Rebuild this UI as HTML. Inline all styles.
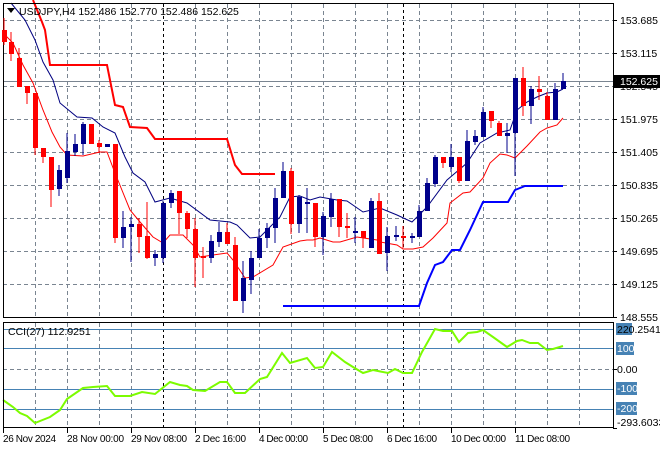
<!DOCTYPE html>
<html><head><meta charset="utf-8"><style>
html,body{margin:0;padding:0;background:#fff;}
svg{display:block;font-family:"Liberation Sans",sans-serif;font-size:10.5px;}
.ax text{font-size:10px;}
</style></head><body>
<svg width="660" height="450" viewBox="0 0 660 450" xmlns="http://www.w3.org/2000/svg">
<rect width="660" height="450" fill="#fff"/>
<g stroke="#7a8591" stroke-width="1" stroke-dasharray="4,3" fill="none">
<path d="M3 20.5H613M3 53.5H613M3 86.5H613M3 119.5H613M3 152.5H613M3 185.5H613M3 218.5H613M3 251.5H613M3 284.5H613M3 317.5H613"/>
<path d="M35.5 4V318M67.5 4V318M99.5 4V318M131.5 4V318M195.5 4V318M227.5 4V318M259.5 4V318M291.5 4V318M323.5 4V318M355.5 4V318M387.5 4V318M419.5 4V318M451.5 4V318M483.5 4V318M515.5 4V318M547.5 4V318M579.5 4V318"/>
<path d="M35.5 323V428M67.5 323V428M99.5 323V428M131.5 323V428M195.5 323V428M227.5 323V428M259.5 323V428M291.5 323V428M323.5 323V428M355.5 323V428M387.5 323V428M419.5 323V428M451.5 323V428M483.5 323V428M515.5 323V428M547.5 323V428M579.5 323V428M3 369.5H613"/>
</g>
<g stroke="#000" stroke-dasharray="3,3"><path d="M163.5 4V318M403.5 4V318M163.5 323V428M403.5 323V428"/></g>
<g stroke="#4682b4"><path d="M3 329.5H613M3 348.5H613M3 389.5H613M3 409.5H613"/></g>
<path d="M3 81.5H613" stroke="#7a8591"/>
<polyline fill="none" stroke="#f00" stroke-width="2" points="33,0 42,22 45,30 50,65 107,65 115,105 123,107 130,127 147,128 155,139 227,139 235,165 242,174 275,174"/>
<polyline fill="none" stroke="#00f" stroke-width="2" points="283,306 419,306 427,283 435,265 443,262 452,250 460,250 470,230 483,202 508,202 515,190 525,186 563,186"/>
<polyline fill="none" stroke="#000080" stroke-width="1" points="11,3 25,20 35,40 43,62 53,80 60,103 77,117 92,118 103,127 115,133 125,157 133,173 145,182 155,202 170,198 187,203 210,220 230,222 237,225 250,238 260,237 280,217 290,197 300,196 310,200 320,197 337,200 347,201 363,212 380,208 397,215 412,222 427,207 447,180 467,163 480,143 497,133 510,130 517,110 527,102 537,97 547,93 557,92 563,89"/>
<polyline fill="none" stroke="#f00" stroke-width="1" points="3,33 13,43 23,65 33,83 43,110 52,132 60,147 67,155 83,156 100,152 107,152 115,173 130,210 140,222 153,237 163,243 170,235 183,235 193,245 200,257 213,255 227,253 233,260 245,278 253,277 273,265 283,247 300,241 307,240 313,240 320,238 333,242 340,242 357,237 377,240 380,242 397,245 403,249 413,249 423,247 433,238 447,223 450,203 463,193 470,192 483,178 490,163 500,154 507,155 515,158 527,146 540,132 547,128 557,125 563,118"/>
<polyline fill="none" stroke="#7cfc00" stroke-width="2" points="3,400 13,407 20,413 27,416 35,423 50,417 60,410 67,399 83,388 93,387 107,386 115,396 130,396 142,392 155,394 170,382 180,385 187,386 193,390 205,391 220,382 227,382 235,393 245,393 260,379 267,377 282,353 290,363 307,358 315,368 323,367 332,352 345,362 353,367 363,373 373,370 388,373 395,369 403,373 412,373 422,352 435,329 443,331 452,331 459,342 468,333 477,332 483,330 493,337 507,347 517,341 522,340 530,343 538,343 547,350 553,349 563,346"/>
<rect x="3.5" y="3.5" width="610" height="314" fill="none" stroke="#000"/>
<rect x="3.5" y="322.5" width="610" height="105" fill="none" stroke="#000"/>
<g stroke="#000"><path d="M613 20.5h4M613 53.5h4M613 86.5h4M613 119.5h4M613 152.5h4M613 185.5h4M613 218.5h4M613 251.5h4M613 284.5h4M613 317.5h4M613 369.5h4M613 428.5h4"/>
<path d="M3.5 428v5M67.5 428v5M131.5 428v5M195.5 428v5M259.5 428v5M323.5 428v5M387.5 428v5M451.5 428v5M515.5 428v5"/></g>
<g fill="#000">
<text x="620" y="24">153.685</text><text x="620" y="57">153.115</text><text x="620" y="90">152.545</text><text x="620" y="123">151.975</text><text x="620" y="156">151.405</text><text x="620" y="189">150.835</text><text x="620" y="222">150.265</text><text x="620" y="255">149.695</text><text x="620" y="288">149.125</text><text x="620" y="321">148.555</text>
</g>
<rect x="614" y="75" width="46" height="13" fill="#000"/><text x="620" y="85" fill="#fff">152.625</text>
<rect x="616" y="323" width="16" height="12" fill="#4682b4"/><text x="617" y="333" fill="#000">220.2541</text>
<rect x="616" y="342" width="18" height="13" fill="#4682b4"/><text x="617" y="352" fill="#fff">100</text>
<text x="617" y="373" fill="#000">0.00</text>
<rect x="616" y="382" width="21" height="13" fill="#4682b4"/><text x="617" y="392" fill="#fff">-100</text>
<rect x="616" y="402" width="21" height="13" fill="#4682b4"/><text x="617" y="412" fill="#fff">-200</text>
<text x="617" y="426" fill="#000">-293.6033</text>
<g class="ax" fill="#000"><text x="3" y="442" textLength="53">26 Nov 2024</text><text x="67" y="442" textLength="57">28 Nov 00:00</text><text x="131" y="442" textLength="56">29 Nov 08:00</text><text x="195" y="442" textLength="51">2 Dec 16:00</text><text x="259" y="442" textLength="49">4 Dec 00:00</text><text x="323" y="442" textLength="50">5 Dec 08:00</text><text x="387" y="442" textLength="50">6 Dec 16:00</text><text x="451" y="442" textLength="55">10 Dec 00:00</text><text x="515" y="442" textLength="55">11 Dec 08:00</text></g>
<path d="M7 8h8l-4 5z" fill="#000"/>
<text x="19" y="15" fill="#000">USDJPY,H4  152.486 152.770 152.486 152.625</text>
<text x="8" y="335" fill="#000">CCI(27) 112.9251</text>
<g stroke-width="1">
<line x1="4" y1="18" x2="4" y2="45" stroke="#f00"/><rect x="2" y="30" width="5" height="12" fill="#f00"/>
<line x1="11" y1="32" x2="11" y2="61" stroke="#f00"/><rect x="9" y="42" width="5" height="12" fill="#f00"/>
<line x1="19" y1="48" x2="19" y2="87" stroke="#f00"/><rect x="17" y="58" width="5" height="29" fill="#f00"/>
<line x1="27" y1="86" x2="27" y2="104" stroke="#f00"/><rect x="25" y="86" width="5" height="7" fill="#f00"/>
<line x1="35" y1="93" x2="35" y2="155" stroke="#f00"/><rect x="33" y="93" width="5" height="55" fill="#f00"/>
<line x1="43" y1="148" x2="43" y2="163" stroke="#f00"/><rect x="41" y="148" width="5" height="9" fill="#f00"/>
<line x1="51" y1="157" x2="51" y2="207" stroke="#f00"/><rect x="49" y="157" width="5" height="33" fill="#f00"/>
<line x1="59" y1="165" x2="59" y2="196" stroke="#00008b"/><rect x="57" y="170" width="5" height="19" fill="#00008b"/>
<line x1="67" y1="133" x2="67" y2="183" stroke="#00008b"/><rect x="65" y="151" width="5" height="27" fill="#00008b"/>
<line x1="75" y1="134" x2="75" y2="156" stroke="#00008b"/><rect x="73" y="144" width="5" height="8" fill="#00008b"/>
<line x1="83" y1="122" x2="83" y2="155" stroke="#00008b"/><rect x="81" y="124" width="5" height="20" fill="#00008b"/>
<line x1="91" y1="124" x2="91" y2="144" stroke="#f00"/><rect x="89" y="124" width="5" height="20" fill="#f00"/>
<line x1="99" y1="140" x2="99" y2="153" stroke="#f00"/><rect x="97" y="143" width="5" height="4" fill="#f00"/>
<rect x="105" y="144" width="5" height="3" fill="#00008b"/>
<line x1="115" y1="144" x2="115" y2="243" stroke="#f00"/><rect x="113" y="144" width="5" height="94" fill="#f00"/>
<line x1="123" y1="211" x2="123" y2="248" stroke="#00008b"/><rect x="121" y="227" width="5" height="11" fill="#00008b"/>
<line x1="131" y1="217" x2="131" y2="262" stroke="#00008b"/><rect x="129" y="224" width="5" height="3" fill="#00008b"/>
<line x1="139" y1="218" x2="139" y2="253" stroke="#f00"/><rect x="137" y="224" width="5" height="13" fill="#f00"/>
<line x1="147" y1="202" x2="147" y2="259" stroke="#f00"/><rect x="145" y="236" width="5" height="22" fill="#f00"/>
<line x1="155" y1="250" x2="155" y2="266" stroke="#00008b"/><rect x="153" y="254" width="5" height="4" fill="#00008b"/>
<line x1="163" y1="201" x2="163" y2="263" stroke="#00008b"/><rect x="161" y="203" width="5" height="55" fill="#00008b"/>
<line x1="171" y1="190" x2="171" y2="208" stroke="#00008b"/><rect x="169" y="193" width="5" height="10" fill="#00008b"/>
<line x1="179" y1="191" x2="179" y2="234" stroke="#f00"/><rect x="177" y="191" width="5" height="22" fill="#f00"/>
<line x1="187" y1="211" x2="187" y2="238" stroke="#f00"/><rect x="185" y="213" width="5" height="16" fill="#f00"/>
<line x1="195" y1="218" x2="195" y2="287" stroke="#f00"/><rect x="193" y="229" width="5" height="29" fill="#f00"/>
<line x1="203" y1="247" x2="203" y2="278" stroke="#f00"/><rect x="201" y="256" width="5" height="2" fill="#f00"/>
<line x1="211" y1="235" x2="211" y2="263" stroke="#00008b"/><rect x="209" y="241" width="5" height="17" fill="#00008b"/>
<line x1="219" y1="222" x2="219" y2="247" stroke="#00008b"/><rect x="217" y="232" width="5" height="10" fill="#00008b"/>
<line x1="227" y1="223" x2="227" y2="244" stroke="#f00"/><rect x="225" y="232" width="5" height="12" fill="#f00"/>
<line x1="235" y1="237" x2="235" y2="301" stroke="#f00"/><rect x="233" y="245" width="5" height="56" fill="#f00"/>
<line x1="243" y1="261" x2="243" y2="313" stroke="#00008b"/><rect x="241" y="278" width="5" height="23" fill="#00008b"/>
<line x1="251" y1="251" x2="251" y2="294" stroke="#00008b"/><rect x="249" y="258" width="5" height="22" fill="#00008b"/>
<line x1="259" y1="229" x2="259" y2="258" stroke="#00008b"/><rect x="257" y="238" width="5" height="20" fill="#00008b"/>
<line x1="267" y1="223" x2="267" y2="248" stroke="#00008b"/><rect x="265" y="228" width="5" height="10" fill="#00008b"/>
<line x1="275" y1="188" x2="275" y2="243" stroke="#00008b"/><rect x="273" y="198" width="5" height="30" fill="#00008b"/>
<line x1="283" y1="162" x2="283" y2="198" stroke="#00008b"/><rect x="281" y="171" width="5" height="27" fill="#00008b"/>
<line x1="291" y1="168" x2="291" y2="234" stroke="#f00"/><rect x="289" y="171" width="5" height="53" fill="#f00"/>
<line x1="299" y1="195" x2="299" y2="233" stroke="#00008b"/><rect x="297" y="197" width="5" height="27" fill="#00008b"/>
<line x1="307" y1="188" x2="307" y2="233" stroke="#00008b"/><rect x="305" y="202" width="5" height="2" fill="#00008b"/>
<line x1="315" y1="203" x2="315" y2="247" stroke="#f00"/><rect x="313" y="203" width="5" height="34" fill="#f00"/>
<line x1="323" y1="212" x2="323" y2="255" stroke="#00008b"/><rect x="321" y="216" width="5" height="21" fill="#00008b"/>
<line x1="331" y1="193" x2="331" y2="227" stroke="#00008b"/><rect x="329" y="199" width="5" height="18" fill="#00008b"/>
<line x1="339" y1="199" x2="339" y2="237" stroke="#f00"/><rect x="337" y="199" width="5" height="28" fill="#f00"/>
<line x1="347" y1="213" x2="347" y2="238" stroke="#f00"/><rect x="345" y="226" width="5" height="2" fill="#f00"/>
<line x1="355" y1="217" x2="355" y2="243" stroke="#00008b"/><rect x="353" y="231" width="5" height="2" fill="#00008b"/>
<line x1="363" y1="231" x2="363" y2="248" stroke="#f00"/><rect x="361" y="231" width="5" height="7" fill="#f00"/>
<line x1="371" y1="198" x2="371" y2="248" stroke="#00008b"/><rect x="369" y="201" width="5" height="47" fill="#00008b"/>
<line x1="379" y1="193" x2="379" y2="254" stroke="#f00"/><rect x="377" y="201" width="5" height="53" fill="#f00"/>
<line x1="387" y1="227" x2="387" y2="271" stroke="#00008b"/><rect x="385" y="236" width="5" height="17" fill="#00008b"/>
<line x1="396" y1="226" x2="396" y2="241" stroke="#00008b"/><rect x="394" y="235" width="5" height="2" fill="#00008b"/>
<line x1="403" y1="226" x2="403" y2="248" stroke="#f00"/><rect x="401" y="236" width="5" height="2" fill="#f00"/>
<line x1="412" y1="233" x2="412" y2="243" stroke="#00008b"/><rect x="410" y="236" width="5" height="2" fill="#00008b"/>
<line x1="419" y1="205" x2="419" y2="237" stroke="#00008b"/><rect x="417" y="211" width="5" height="26" fill="#00008b"/>
<line x1="427" y1="178" x2="427" y2="211" stroke="#00008b"/><rect x="425" y="183" width="5" height="28" fill="#00008b"/>
<line x1="435" y1="155" x2="435" y2="187" stroke="#00008b"/><rect x="433" y="157" width="5" height="27" fill="#00008b"/>
<line x1="443" y1="157" x2="443" y2="168" stroke="#f00"/><rect x="441" y="157" width="5" height="6" fill="#f00"/>
<line x1="451" y1="144" x2="451" y2="172" stroke="#00008b"/><rect x="449" y="157" width="5" height="10" fill="#00008b"/>
<line x1="459" y1="157" x2="459" y2="183" stroke="#f00"/><rect x="457" y="157" width="5" height="24" fill="#f00"/>
<line x1="467" y1="130" x2="467" y2="181" stroke="#00008b"/><rect x="465" y="141" width="5" height="40" fill="#00008b"/>
<line x1="475" y1="130" x2="475" y2="145" stroke="#00008b"/><rect x="473" y="136" width="5" height="6" fill="#00008b"/>
<line x1="483" y1="107" x2="483" y2="137" stroke="#00008b"/><rect x="481" y="112" width="5" height="25" fill="#00008b"/>
<line x1="491" y1="111" x2="491" y2="128" stroke="#f00"/><rect x="489" y="111" width="5" height="10" fill="#f00"/>
<line x1="499" y1="121" x2="499" y2="136" stroke="#f00"/><rect x="497" y="123" width="5" height="13" fill="#f00"/>
<line x1="507" y1="123" x2="507" y2="153" stroke="#00008b"/><rect x="505" y="133" width="5" height="3" fill="#00008b"/>
<line x1="515" y1="78" x2="515" y2="176" stroke="#00008b"/><rect x="513" y="78" width="5" height="55" fill="#00008b"/>
<line x1="523" y1="67" x2="523" y2="116" stroke="#f00"/><rect x="521" y="78" width="5" height="28" fill="#f00"/>
<line x1="531" y1="86" x2="531" y2="124" stroke="#00008b"/><rect x="529" y="89" width="5" height="17" fill="#00008b"/>
<line x1="539" y1="76" x2="539" y2="100" stroke="#f00"/><rect x="537" y="89" width="5" height="3" fill="#f00"/>
<line x1="547" y1="92" x2="547" y2="120" stroke="#f00"/><rect x="545" y="96" width="5" height="24" fill="#f00"/>
<line x1="555" y1="83" x2="555" y2="120" stroke="#00008b"/><rect x="553" y="89" width="5" height="31" fill="#00008b"/>
<line x1="563" y1="73" x2="563" y2="89" stroke="#00008b"/><rect x="561" y="81" width="5" height="8" fill="#00008b"/>
</g>
</svg>
</body></html>
